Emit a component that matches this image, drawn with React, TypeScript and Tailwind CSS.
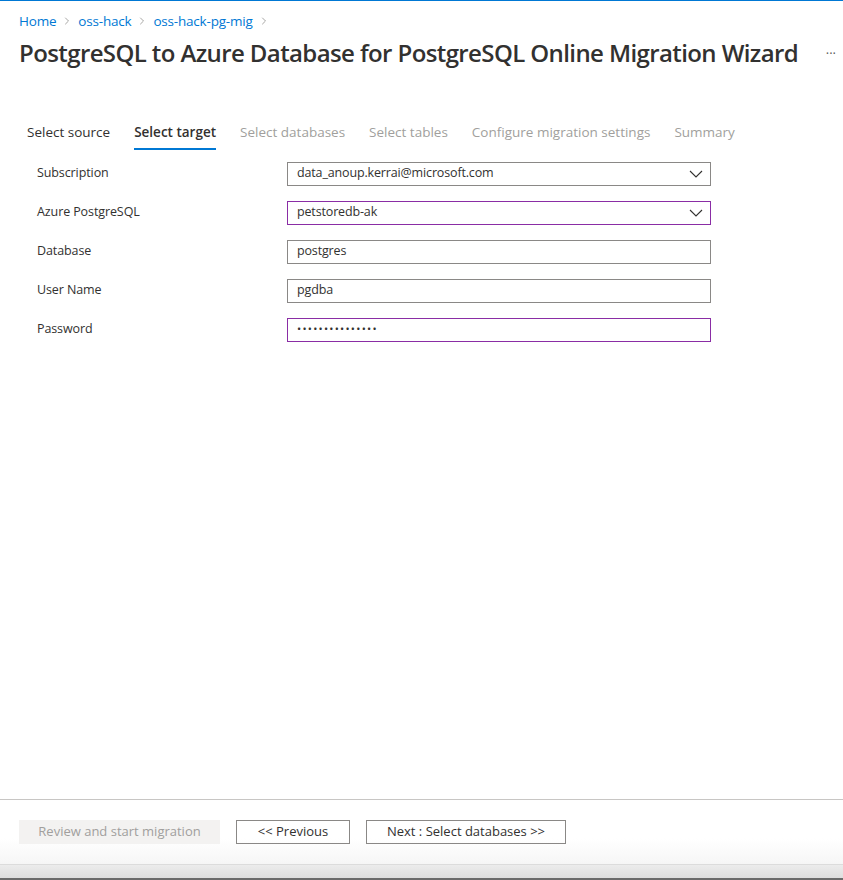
import { ChevronRight } from 'lucide-react'

const crumbs = ['Home', 'oss-hack', 'oss-hack-pg-mig']

const steps = [
  { label: 'Select source', state: 'done' },
  { label: 'Select target', state: 'active' },
  { label: 'Select databases', state: 'off' },
  { label: 'Select tables', state: 'off' },
  { label: 'Configure migration settings', state: 'off' },
  { label: 'Summary', state: 'off' },
]

const fields = [
  { label: 'Subscription', value: 'data_anoup.kerrai@microsoft.com', select: true, focus: false },
  { label: 'Azure PostgreSQL', value: 'petstoredb-ak', select: true, focus: true },
  { label: 'Database', value: 'postgres', select: false, focus: false },
  { label: 'User Name', value: 'pgdba', select: false, focus: false },
  { label: 'Password', value: '•••••••••••••••', select: false, focus: true },
]

function Caret() {
  return (
    <svg width="14" height="8" viewBox="0 0 14 8" fill="none" className="text-[#323130]">
      <path d="M1 1 L7 7 L13 1" stroke="currentColor" strokeWidth="1.1" />
    </svg>
  )
}

export default function App() {
  return (
    <div
      className="flex h-[880px] w-[843px] flex-col overflow-hidden bg-white text-[#323130]"
      style={{ fontFamily: '"Open Sans", "Noto Sans", sans-serif' }}
    >
      <div className="h-px w-full bg-[#0078d4]" />

      {/* Header */}
      <div className="pl-[19px] pr-[7px] pt-[10px]">
        <nav className="flex items-center text-[13.5px] text-[#0078d4]">
          {crumbs.map((c) => (
            <span key={c} className="flex items-center">
              <span className="tracking-[-0.2px]">{c}</span>
              <ChevronRight size={12} strokeWidth={1.5} className="mx-[5px] text-[#8a8886]" />
            </span>
          ))}
        </nav>
        <div className="mt-[4px] flex items-center justify-between">
          <h1 className="text-[24px] font-semibold tracking-[-0.6px] text-[#323130]">
            PostgreSQL to Azure Database for PostgreSQL Online Migration Wizard
          </h1>
          <span className="text-[13px] text-[#605e5c]">···</span>
        </div>
      </div>

      {/* Steps */}
      <div className="mt-[51px] flex gap-[24px] px-[27px] text-[13.5px]">
        {steps.map((s) => (
          <div
            key={s.label}
            className={
              s.state === 'active'
                ? 'border-b-2 border-[#0078d4] pb-[5px] font-semibold text-[#323130]'
                : s.state === 'done'
                  ? 'border-b-2 border-transparent pb-[5px] text-[#323130]'
                  : 'border-b-2 border-transparent pb-[5px] text-[#a19f9d]'
            }
          >
            {s.label}
          </div>
        ))}
      </div>

      {/* Form */}
      <div className="mt-[12px] flex flex-col gap-[15px] px-[37px]">
        {fields.map((f) => (
          <div key={f.label} className="flex items-center">
            <label className="w-[250px] text-[12.5px] tracking-[-0.1px] text-[#323130]">{f.label}</label>
            <div
              className={
                'flex h-[24px] w-[424px] items-center justify-between pl-[9px] pr-[7px] text-[12.5px] tracking-[-0.15px] ' +
                (f.focus ? 'border border-[#8a2da5]' : 'border border-[#8a8886]')
              }
            >
              <span className={f.label === 'Password' ? 'text-[11px] tracking-[1.25px]' : ''}>
                {f.value}
              </span>
              {f.select && <Caret />}
            </div>
          </div>
        ))}
      </div>

      <div className="flex-1" />

      {/* Footer */}
      <div className="border-t border-[#c8c6c4] bg-gradient-to-b from-white from-60% to-[#f6f6f6] px-[19px] pt-[20px] pb-[20px]">
        <div className="flex items-center gap-[16px] text-[13px]">
          <button className="h-[24px] w-[201px] bg-[#f3f2f1] text-[#a19f9d]">Review and start migration</button>
          <button className="h-[24px] w-[114px] border border-[#8a8886] text-[#323130]">&lt;&lt; Previous</button>
          <button className="h-[24px] w-[200px] border border-[#8a8886] text-[#323130]">
            Next : Select databases &gt;&gt;
          </button>
        </div>
      </div>
      <div className="h-[14px] border-t border-[#dcdcdc] bg-gradient-to-b from-[#ececec] to-[#dedede]" />
      <div className="h-[2px] bg-[#6b6b6b]" />
    </div>
  )
}
